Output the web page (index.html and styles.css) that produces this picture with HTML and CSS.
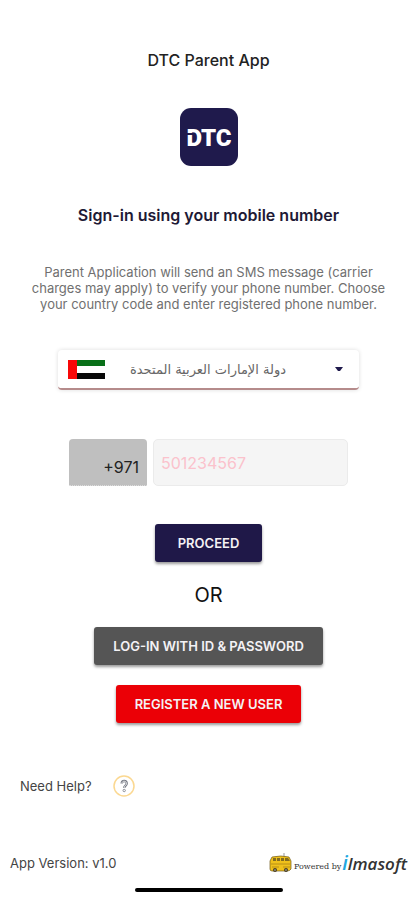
FILE: index.html
```html
<!DOCTYPE html>
<html lang="en">
<head>
<meta charset="utf-8">
<meta name="viewport" content="width=device-width, initial-scale=1">
<title>DTC Parent App</title>
<link rel="stylesheet" href="styles.css">
</head>
<body>
<header class="header">
  <h1 class="title">DTC Parent App</h1>
  <svg class="logo" viewBox="0 0 58 58" role="img" aria-label="DTC">
    <rect width="58" height="58" rx="11" fill="#1f1a4c"/>
    <text class="logo-text" x="29" y="38" text-anchor="middle">DTC</text>
    <path d="M6 25h7v2H6z" fill="#1f1a4c"/>
  </svg>
</header>
<main class="main">
  <h2 class="heading">Sign-in using your mobile number</h2>
  <p class="intro">Parent Application will send an SMS message (carrier charges may apply) to verify your phone number. Choose your country code and enter registered phone number.</p>
  <form class="form">
    <div class="country">
      <svg class="flag" viewBox="0 0 37 19" aria-hidden="true">
        <path fill="#fff" d="M0 0h37v19H0z"/>
        <path fill="#087018" d="M9 0h28v6H9z"/>
        <path fill="#080808" d="M9 13h28v6H9z"/>
        <path fill="#f80808" d="M0 0h9v19H0z"/>
      </svg>
      <select class="country-select" aria-label="Country">
        <option lang="ar">دولة الإمارات العربية المتحدة</option>
      </select>
      <svg class="caret" viewBox="0 0 8 5" aria-hidden="true"><path d="M0 0h8L5 4H3z" fill="#1f1a4c"/></svg>
    </div>
    <div class="phone">
      <input class="code" type="text" value="+971" aria-label="Country code" readonly>
      <input class="number" type="tel" placeholder="501234567" aria-label="Mobile number">
    </div>
    <button class="button button-proceed" type="submit">PROCEED</button>
    <p class="or">OR</p>
    <button class="button" type="button">LOG-IN WITH ID &amp; PASSWORD</button>
    <button class="button button-register" type="button">REGISTER A NEW USER</button>
  </form>
</main>
<div class="help">
  <span>Need Help?</span>
  <button class="help-button" type="button" aria-label="Help">
    <svg viewBox="0 0 22 22" aria-hidden="true">
      <circle cx="11" cy="11" r="10" fill="none" stroke="#fbd891" stroke-width="1.5"/>
      <path d="M8.7 8.6c0-3.5 5-3.5 5 0 0 2-2.5 2-2.5 4.400" fill="none" stroke="#777b85" stroke-width="2.400"/>
      <path d="M8.900 8.400c.2-3 4.600-2.800 4.600.2 0 2-2.400 2-2.400 4.400" fill="none" stroke="#fff" stroke-width=".8"/>
      <circle cx="11.200" cy="15.500" r="1.200" fill="#fff" stroke="#777b85" stroke-width=".8"/>
    </svg>
  </button>
</div>
<footer class="footer">
  <span>App Version: v1.0</span>
  <div class="vendor">
    <svg class="bus" viewBox="0 0 24 20" aria-hidden="true">
      <path d="M15 0v4" stroke="#999" stroke-width="1"/>
      <path d="M3 4q9-2 17 0l2 4v8q-1 2-4 2H3q-2 0-2-2V8z" fill="#f0c11b" stroke="#70591a" stroke-width=".7"/>
      <path d="M4 5h3v3H4zm4 0h3v3H8zm4 0h3v3h-3zm4 0h3l2 3h-5z" fill="#826c20"/>
      <path d="M2 11h19M3 14h7m4 0h7" stroke="#a98416" stroke-width=".8"/>
      <circle cx="6" cy="17" r="2" fill="#443b21"/><circle cx="17" cy="17" r="2" fill="#443b21"/>
      <circle cx="6" cy="17" r=".7" fill="#ddd"/><circle cx="17" cy="17" r=".7" fill="#ddd"/>
    </svg>
    <span class="powered">Powered by</span>
    <span class="brand"><span class="brand-i">i</span>lmasoft</span>
  </div>
</footer>
<div class="home-bar"></div>
</body>
</html>
```
FILE: styles.css
```css
* { box-sizing: border-box; }
body {
  margin: 0;
  min-height: 100vh;
  display: flex;
  flex-direction: column;
  background: #fff;
  color: #444;
  font-family: Inter, "DejaVu Sans", sans-serif;
  font-size: 13px;
}
h1, h2, p { margin: 0; }
.header {
  display: flex;
  flex-direction: column;
  align-items: center;
  gap: 36px;
  padding-top: 48px;
}
.title { font-size: 16px; line-height: 24px; font-weight: 500; color: #222; }
.logo { width: 58px; height: 58px; }
.logo-text { font: 900 24px Roboto, sans-serif; fill: #fff; }
.main { padding: 37px 24px 0; text-align: center; }
.heading { font-size: 16px; line-height: 24px; font-weight: 600; color: #1e1935; }
.intro {
  max-width: 368px;
  margin: 37px auto 0;
  font-size: 13px;
  line-height: 16px;
  color: #707070;
}
.form { display: flex; flex-direction: column; align-items: center; }
.country {
  display: flex;
  align-items: center;
  width: 100%;
  max-width: 301px;
  height: 40px;
  margin-top: 38px;
  padding: 0 16px 0 10px;
  border-bottom: 2px solid #b58b8b;
  border-radius: 4px;
  box-shadow: 0 0 4px rgba(0, 0, 0, .14);
}
.flag { width: 37px; height: 19px; }
.country-select {
  flex: 1;
  min-width: 0;
  height: 36px;
  padding: 0 24px 0 0;
  border: 0;
  appearance: none;
  background: transparent;
  color: #666;
  font: 13px "DejaVu Sans", sans-serif;
  text-align: center;
  text-align-last: center;
}
.caret { width: 8px; height: 5px; }
.phone {
  display: flex;
  gap: 6px;
  width: 100%;
  max-width: 279px;
  margin-top: 49px;
}
.code, .number { height: 47px; font: 16px Inter, sans-serif; }
.code {
  width: 78px;
  padding: 10px 8px 0;
  border: 0;
  border-bottom: 1px dotted #ddd;
  border-radius: 4px 4px 0 0;
  background: #bfbfbf;
  color: #222;
  text-align: right;
}
.number {
  flex: 1;
  min-width: 0;
  padding: 0 7px;
  border: 1px solid #ebebeb;
  border-radius: 5px;
  background: #f5f5f5;
}
.number::placeholder { color: #fbc2cc; opacity: 1; }
.button {
  height: 38px;
  margin-top: 20px;
  padding: 0 19px;
  border: 0;
  border-radius: 3px;
  background: #555;
  box-shadow: 0 2px 3px rgba(0, 0, 0, .4);
  color: #f4f2f5;
  font: 600 13px Inter, sans-serif;
}
.button-proceed { margin-top: 38px; padding: 0 23px; background: #1f1848; }
.button-register { background: #eb0006; }
.or { margin-top: 21px; font-size: 20px; line-height: 24px; color: #111; }
.help {
  display: flex;
  align-items: center;
  gap: 21px;
  margin-top: 52px;
  padding-left: 20px;
}
.help-button { width: 22px; height: 22px; padding: 0; border: 0; background: none; }
.help-button svg { display: block; }
.footer {
  display: flex;
  align-items: center;
  justify-content: space-between;
  margin-top: auto;
  padding: 0 10px;
}
.vendor { display: flex; align-items: center; gap: 1px; height: 24px; }
.bus { width: 24px; height: 20px; }
.powered { padding-top: 6px; font: 8px "DejaVu Serif", serif; color: #333; }
.brand { font: italic 600 17px/24px "Open Sans", sans-serif; color: #333; }
.brand-i { font-size: 20px; color: #22a7e0; }
.home-bar {
  width: 148px;
  height: 4px;
  margin: 13px auto 8px;
  border-radius: 2px;
  background: #000;
}
```
